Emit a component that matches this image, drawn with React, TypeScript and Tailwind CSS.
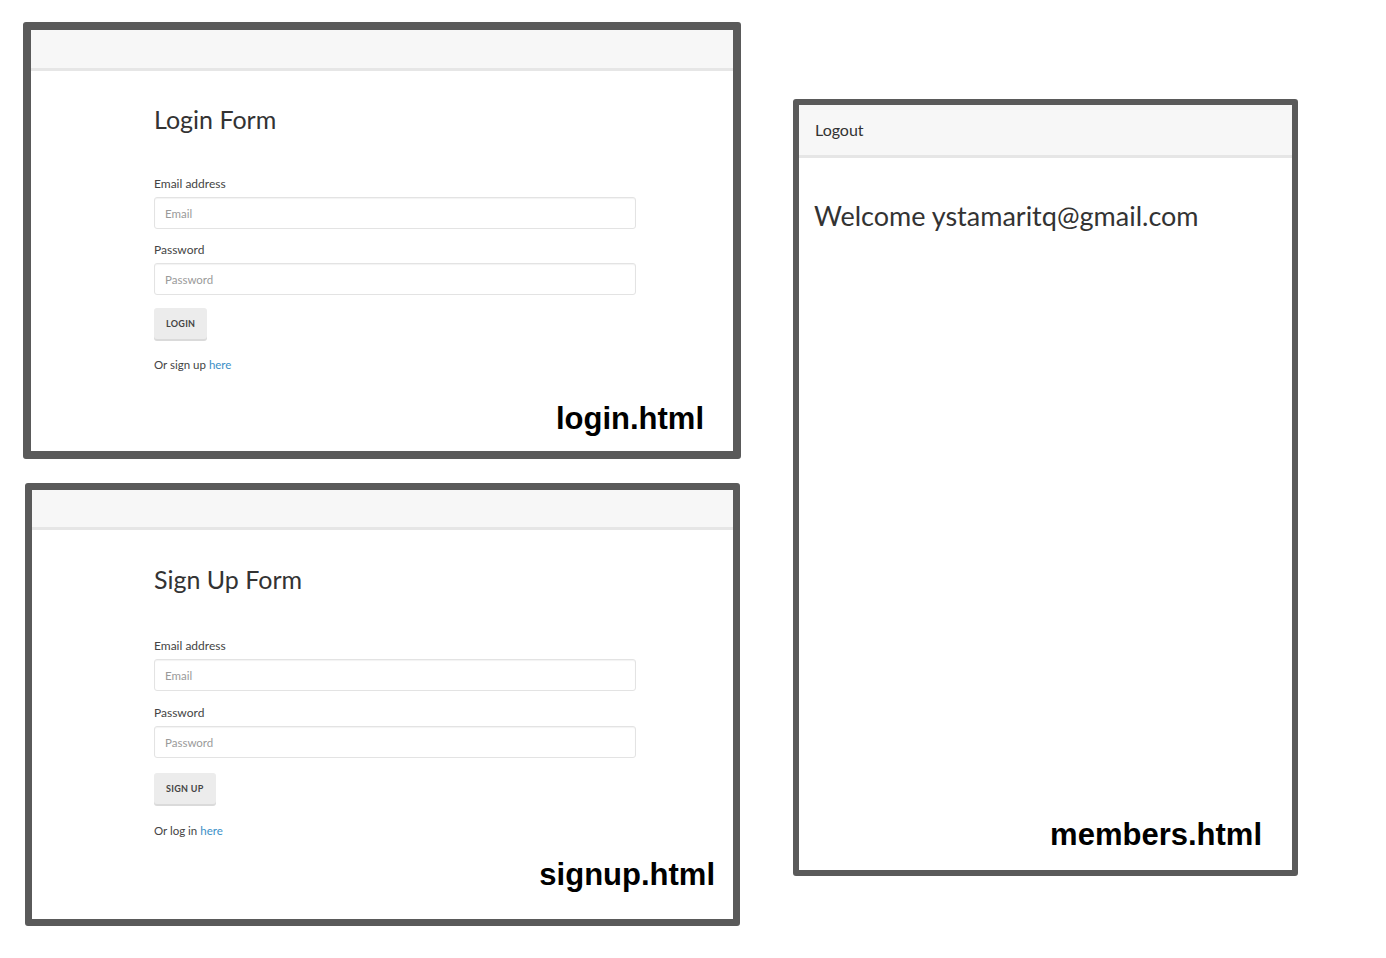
import React from 'react';

const font = { fontFamily: 'Lato, "Open Sans", sans-serif' };

const Field = ({ label, placeholder, type, gap }: { label: string; placeholder: string; type: string; gap: string }) => (
  <div className="flex flex-col">
    <label className="text-[12px] leading-4 text-[#444]">{label}</label>
    <input
      type={type}
      placeholder={placeholder}
      className={`h-8 w-[482px] rounded-[3px] border border-[#e3e3e3] px-[10px] text-[11.5px] text-[#444] shadow-[inset_0_1px_1px_rgba(0,0,0,0.05)] outline-none placeholder:text-[#9a9a9a] ${gap}`}
    />
  </div>
);

const Navbar = ({ children, h }: { children?: React.ReactNode; h: string }) => (
  <div className={`flex items-center border-b-[3px] border-[#e6e6e6] bg-[#f7f7f7] px-4 ${h}`}>{children}</div>
);

const Tag = ({ text }: { text: string }) => (
  <span className="text-[31px] font-bold leading-[34px] text-black" style={{ fontFamily: '"Liberation Sans", Arial, sans-serif' }}>
    {text}
  </span>
);

interface FormPanelProps {
  title: string;
  button: string;
  prompt: string;
  tag: string;
  frame: string;
  nav: string;
  body: string;
  headGap: string;
  fieldGap: string;
  inputGap: string;
  btnGap: string;
  promptGap: string;
  tagBox: string;
}

const FormPanel = (p: FormPanelProps) => (
  <div className={`flex flex-col rounded-[3px] border-[#5a5a5a] bg-white ${p.frame}`}>
    <Navbar h={p.nav} />
    <div className={`flex flex-1 flex-col ${p.body}`} style={font}>
      <h1 className="text-[25px] leading-[30px] text-[#333]">{p.title}</h1>
      <div className={`flex flex-col ${p.headGap} ${p.fieldGap}`}>
        <Field label="Email address" placeholder="Email" type="email" gap={p.inputGap} />
        <Field label="Password" placeholder="Password" type="password" gap={p.inputGap} />
      </div>
      <button
        className={`h-[31px] self-start rounded-[3px] bg-[#ececec] px-3 text-[9px] font-bold uppercase tracking-[0.3px] text-[#444] shadow-[0_2px_0_#dadada] ${p.btnGap}`}
      >
        {p.button}
      </button>
      <p className={`text-[11.5px] leading-4 text-[#444] ${p.promptGap}`}>
        {p.prompt} <a href="#" className="text-[#3a8fc7]">here</a>
      </p>
    </div>
    <div className={`flex justify-end ${p.tagBox}`}>
      <Tag text={p.tag} />
    </div>
  </div>
);

export default function App() {
  return (
    <div className="flex h-[958px] w-[1386px] bg-white">
      <div className="flex flex-col pl-[23px] pt-[22px]">
        <FormPanel
          title="Login Form"
          button="Login"
          prompt="Or sign up"
          tag="login.html"
          frame="h-[437px] w-[718px] border-[8px]"
          nav="h-[41px]"
          body="pl-[123px] pt-[33px]"
          headGap="mt-[42px]"
          fieldGap="gap-[13px]"
          inputGap="mt-[5px]"
          btnGap="mt-[13px]"
          promptGap="mt-[18px]"
          tagBox="pb-[15px] pr-[29px]"
        />
        <div className="ml-[2px] mt-[24px]">
          <FormPanel
            title="Sign Up Form"
            button="Sign up"
            prompt="Or log in"
            tag="signup.html"
            frame="h-[443px] w-[715px] border-[7px]"
            nav="h-[40px]"
            body="pl-[122px] pt-[34px]"
            headGap="mt-[44px]"
            fieldGap="gap-[14px]"
            inputGap="mt-[5px]"
            btnGap="mt-[15px]"
            promptGap="mt-[19px]"
            tagBox="pb-[27px] pr-[18px]"
          />
        </div>
      </div>
      <div className="ml-[52px] mt-[99px] flex h-[777px] w-[505px] flex-col rounded-[3px] border-[6px] border-[#5a5a5a] bg-white">
        <Navbar h="h-[53px]">
          <a href="#" className="text-[16px] text-[#333]" style={font}>
            Logout
          </a>
        </Navbar>
        <div className="flex-1 pl-[15px] pt-[41px]" style={font}>
          <h2 className="text-[27px] leading-[34px] text-[#333]">Welcome ystamaritq@gmail.com</h2>
        </div>
        <div className="flex justify-end pb-[18px] pr-[30px]">
          <Tag text="members.html" />
        </div>
      </div>
    </div>
  );
}
